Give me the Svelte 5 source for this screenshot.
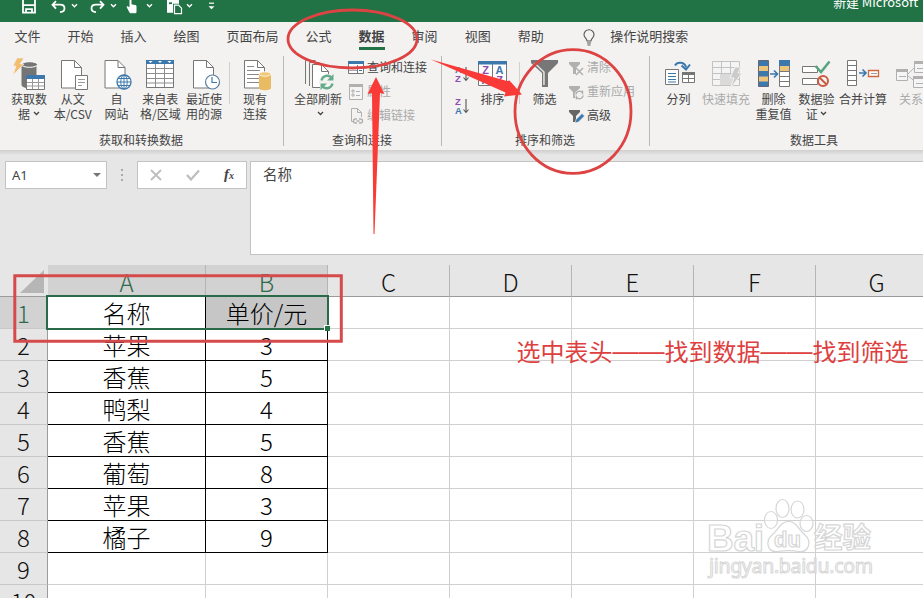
<script>
  const tabs = ['文件', '开始', '插入', '绘图', '页面布局', '公式', '数据', '审阅', '视图', '帮助'];
  const active = '数据';

  const getData = [
    { icon: 'database', lines: ['获取数', '据'], menu: true },
    { icon: 'csv', lines: ['从文', '本/CSV'] },
    { icon: 'web', lines: ['自', '网站'] },
    { icon: 'table', lines: ['来自表', '格/区域'] },
    { icon: 'recent', lines: ['最近使', '用的源'] }
  ];

  const tools = [
    { icon: 'split', lines: ['分列'], w: 47 },
    { icon: 'flash', lines: ['快速填充'], w: 48, off: true },
    { icon: 'dedupe', lines: ['删除', '重复值'], w: 47 },
    { icon: 'validate', lines: ['数据验', '证'], w: 39, menu: true },
    { icon: 'merge', lines: ['合并计算'], w: 54 },
    { icon: 'relation', lines: ['关系'], w: 42, off: true }
  ];

  const columns = ['A', 'B', 'C', 'D', 'E', 'F', 'G'];
  const rows = [
    ['名称', '单价/元'],
    ['苹果', '3'],
    ['香蕉', '5'],
    ['鸭梨', '4'],
    ['香蕉', '5'],
    ['葡萄', '8'],
    ['苹果', '3'],
    ['橘子', '9'],
    [],
    []
  ];
</script>

{#snippet chevron()}
  <svg class="chev" width="7" height="5" viewBox="0 0 7 5"><path d="M1 1l2.500 2.500L6 1" fill="none" stroke="currentColor" stroke-width="1.300" /></svg>
{/snippet}

{#snippet page(x)}
  <path d="M{x} 4.5h13l7 7v20.5h-20z" fill="#fff" stroke="#777" />
  <path d="M{x + 13} 4.5v7h7" fill="none" stroke="#777" />
{/snippet}

{#snippet bigIcon(name)}
  <svg class="big-icon" width="40" height="36" viewBox="0 0 40 36" fill="none">
    {#if name === 'database'}
      <path d="M12.500 8.500v20c0 5 15 5 15 0v-20z" fill="#757575" />
      <ellipse cx="20.500" cy="8.500" rx="8" ry="2.800" fill="#757575" stroke="#fff" stroke-width="1" />
      <path d="M8 2h7l-4 6h4L4 19l3-9H4z" fill="#f2bd6d" stroke="#f3f2f1" stroke-width=".6" />
      <path d="M17.500 19.500h18v14h-18z" fill="#fff" stroke="#777" />
      <path d="M17 19h19v4H17z" fill="#3d78ad" />
      <path d="M23.500 23v10M29.500 23v10M18 26.500h17M18 30h17" stroke="#999" />
    {:else if name === 'csv'}
      {@render page(8.5)}
      <path d="M22.500 19.500h12v14h-12z" fill="#fff" stroke="#777" />
      <path d="M25 23.500h7M25 26.500h7M25 29.500h4" stroke="#999" />
    {:else if name === 'web'}
      {@render page(9)}
      <circle cx="28" cy="26" r="7" fill="#fff" stroke="#3d78ad" stroke-width="1.300" />
      <ellipse cx="28" cy="26" rx="3.200" ry="7" stroke="#3d78ad" />
      <path d="M21 26h14M22.500 22.500h11M22.500 29.500h11M28 19v14" stroke="#3d78ad" />
    {:else if name === 'table'}
      <path d="M6.500 4.500h27v27h-27z" fill="#fff" stroke="#777" />
      <path d="M6 4h28v4H6z" fill="#3d78ad" />
      <path d="M8.500 5h4l-2 2zM18 5h4l-2 2zM27.500 5h4l-2 2z" fill="#fff" />
      <path d="M15.500 8v23M24.500 8v23M7 12.500h26M7 17.500h26M7 22.500h26M7 27h26" stroke="#8d8d8d" />
    {:else if name === 'recent'}
      {@render page(9.5)}
      <circle cx="28.500" cy="26" r="7" fill="#fff" stroke="#5c7f9f" stroke-width="1.200" />
      <path d="M28 21v5.500h5" stroke="#3d78ad" stroke-width="1.200" />
    {:else if name === 'existing'}
      {@render page(9.5)}
      <path d="M12 10.500h7M12 14.500h13M12 18.500h12M12 22.500h12M12 26.500h12" stroke="#888" />
      <path d="M24 18v14c0 3 12 3 12 0V18z" fill="#e9bb62" />
      <ellipse cx="30" cy="18" rx="6" ry="2.200" fill="#f0c877" stroke="#fff" stroke-width=".8" />
    {:else if name === 'refresh'}
      <path d="M7.500 28V4.500h10M11.500 30V6.500h10" stroke="#777" />
      <path d="M14.500 32V8.500h9l7 7V32z" fill="#fff" />
      <path d="M22 31.500h-7.500V8.500h9v7h7M23.500 8.500l7 7v3" stroke="#777" />
      <circle cx="29" cy="26" r="8" fill="#f3f2f1" />
      <path d="M23.500 24.500a6 6 0 0 1 10.500-2.500M34.500 27.500a6 6 0 0 1-10.500 2.500" stroke="#66ab8c" stroke-width="2.300" />
      <path d="M35.500 18v6.500H29zM22.500 34v-6.500H29z" fill="#66ab8c" />
    {:else if name === 'sort'}
      <path d="M5.500 5.500h28v24h-28zM19.500 6v23" fill="#fff" stroke="#777" />
      <path d="M5 5h29v3.500H5z" fill="#3d78ad" />
      <g font-family="Liberation Sans, sans-serif" font-size="11" font-weight="700" text-anchor="middle">
        <text x="12.500" y="18" fill="#8f4cae">Z</text><text x="12.500" y="28" fill="#3d78ad">A</text>
        <text x="26.500" y="18" fill="#3d78ad">A</text><text x="26.500" y="28" fill="#8f4cae">Z</text>
      </g>
    {:else if name === 'filter'}
      <path d="M6 4h27v3L23 17v14h-6V17L6 7z" fill="#777" />
      <path d="M8.500 7l9.700 9.200V29h1.500V15.700L10.500 7z" fill="#e7e7e7" />
    {:else if name === 'split'}
      <path d="M6.500 13.500h13v15h-13z" fill="#fff" stroke="#777" />
      <path d="M9 17.500h8M9 20.500h8M9 23.500h8M9 26h8" stroke="#3d78ad" />
      <path d="M23.500 16.500h12v10h-12z" fill="#fff" stroke="#777" />
      <path d="M23 16h13v3H23z" fill="#757575" />
      <path d="M29.500 19v7M24 22.500h11" stroke="#777" />
      <path d="M16 9.500c2-4 10-4 11 2" stroke="#3d78ad" stroke-width="2" />
      <path d="M22.500 9.500l4.500 4 4-5" stroke="#3d78ad" stroke-width="2" />
    {:else if name === 'flash'}
      <path d="M6.500 5.500h27v24h-27zM15.500 5.500v24M24.500 5.500v24M6.500 11.500h27M6.500 17.500h27M6.500 23.500h27" fill="#f5f4f4" stroke="#c2c2c2" />
      <path d="M14 18h14v11H14z" fill="#dadada" />
      <path d="M29 11h6l-3 6h4L24 33l4-11h-4z" fill="#cdcaca" stroke="#f3f2f1" />
    {:else if name === 'dedupe'}
      <path d="M4.500 4.500h10v26h-10z" fill="#3d78ad" stroke="#667" />
      <path d="M5 10h9v5H5zM5 20.500h9v5H5z" fill="#edc47c" />
      <path d="M25.500 4.500h10v26h-10z" fill="#fff" stroke="#777" />
      <path d="M25 4h11v6H25z" fill="#3d78ad" /><path d="M26 10h9v5h-9z" fill="#edc47c" />
      <path d="M26 15.500h9M26 20.500h9M26 25.500h9" stroke="#777" />
      <path d="M16 18h7M20 14.500l3.500 3.500-3.500 3.500" stroke="#3d78ad" stroke-width="1.700" />
    {:else if name === 'validate'}
      <path d="M5.500 10.500h15v6h-15zM5.500 22.500h15v6h-15z" fill="#fff" stroke="#777" />
      <path d="M18.500 10l5.500 6 8.500-10.500" stroke="#56a480" stroke-width="2.500" />
      <circle cx="26" cy="25" r="5" fill="#f3f2f1" stroke="#cc5b45" stroke-width="2" />
      <path d="M22.500 21.500l7 7" stroke="#cc5b45" stroke-width="2" />
    {:else if name === 'merge'}
      <path d="M4.500 4.500h9v25h-9zM4.500 9.500h9M4.500 14.500h9M4.500 19.500h9M4.500 24.500h9" fill="#fff" stroke="#777" />
      <path d="M16 17h6M19.500 13.500L23 17l-3.500 3.500" stroke="#3d78ad" stroke-width="1.700" />
      <path d="M25.500 14.500h10v6h-10z" fill="#fff" stroke="#cf6840" stroke-width="1.300" />
      <path d="M28 17.500h6" stroke="#999" />
    {:else if name === 'relation'}
      <path d="M17 18l8-8M17 20l8 6" stroke="#b5b5b5" />
      <path d="M5.500 13.500h11v11h-11zM23.500 5.500h13v11h-13zM22.500 20.500h13v11h-13z" fill="#f5f5f5" stroke="#b0b0b0" />
      <path d="M5 13h12v3H5zM23 5h14v3H23zM22 20h14v3H22z" fill="#b0b0b0" />
      <path d="M8 20.500h7M26 12.500h8M25 27.500h8" stroke="#b0b0b0" />
    {/if}
  </svg>
{/snippet}

{#snippet command(icon, lines, menu, off, w)}
  <div class="command" class:off style:width="{w}px">
    {@render bigIcon(icon)}
    {#each lines as line, i}
      <span>{line}{#if menu && i === lines.length - 1}&nbsp;{@render chevron()}{/if}</span>
    {/each}
  </div>
{/snippet}

{#snippet smallFunnel(color)}
  <path d="M0 1h11v2L7 7v6H4V7L0 3z" fill={color} />
{/snippet}

<div class="window">
  <header class="title">
    <div class="quick">
      <svg width="193" height="22" viewBox="0 -.7 193 22" fill="none" stroke="#fff" stroke-width="1.800">
        <path d="M1-1v13h12V-1M1 4.500h12M4 12V8.500h6V12" />
        <path d="M34 .5L30.500 4l3.500 4M31 4h7c6 0 6 7 0 7.500" />
        <path d="M78 .5L81.500 4 78 8M81 4h-7c-6 0-6 7 0 7.500" />
        <path d="M108-1v8l-3-1 3 6h6V5l-5-1v-5z" fill="#fff" stroke-width="1" />
        <path d="M145-1h12v4h-6v9h-6z" fill="#fff" stroke="none" /><path d="M147 2.500h3" stroke="#217346" /><path d="M152.500 4.500h4l3 3v5.500h-7z" fill="#217346" stroke-width="1.200" />
        <g stroke-width="1.400"><path d="M50 3.500l2.500 2.500L55 3.500M89 3.500l2.500 2.500L94 3.500M125 3.500l2.500 2.500 2.500-2.500M165 3.500l2.500 2.500 2.500-2.500" /></g>
        <path d="M187 2.500h5" stroke-width="1.200" /><path d="M186.500 5.500h6l-3 3z" fill="#fff" stroke="none" />
      </svg>
    </div>
    <span>新建 Microsoft</span>
  </header>

  <nav class="tabs">
    {#each tabs as tab}
      <span class:active={tab === active}>{tab}</span>
    {/each}
    <div class="tell">
      <svg width="12" height="17" viewBox="0 0 12 17" fill="none" stroke="#555" stroke-width="1.100">
        <path d="M4 12c0-2.500-3-3.300-3-6.300a5 5 0 0 1 10 0C11 8.700 8 9.500 8 12zM4 14h4M4.500 16h3" />
      </svg>
      <span>操作说明搜索</span>
    </div>
  </nav>

  <section class="ribbon">
    <div class="group g1">
      <div class="commands">
        {#each getData as c}
          {@render command(c.icon, c.lines, c.menu, false, 43.8)}
        {/each}
        <i class="divider"></i>
        {@render command('existing', ['现有', '连接'], false, false, 50)}
      </div>
      <div class="caption">获取和转换数据</div>
    </div>

    <div class="group g2">
      <div class="commands">
        <div class="command refresh">
          {@render bigIcon('refresh')}
          <span>全部刷新</span>
          <span>{@render chevron()}</span>
        </div>
        <div class="stack">
          <div>
            <svg width="16" height="16" viewBox="0 0 16 16" fill="none"><path d="M.5 1.500h15v12H.5zM9.500 5v8" fill="#fff" stroke="#777" /><path d="M0 1h16v3H0z" fill="#3d78ad" /><path d="M1 7.500h8M1 10.500h8" stroke="#aaa" /><path d="M11 7.500h3M11 10.500h3" stroke="#3d78ad" /></svg>
            <span>查询和连接</span>
          </div>
          <div class="off">
            <svg width="16" height="16" viewBox="0 0 16 16" fill="none"><path d="M1.500.5h13v15h-13z" fill="#f5f5f5" stroke="#b0b0b0" /><path d="M1 0h14v3H1z" fill="#b0b0b0" /><path d="M4 6h2v2H4zM4 10h2v2H4zM8 7.500h4M8 11.500h4" stroke="#b0b0b0" /></svg>
            <span>属性</span>
          </div>
          <div class="off">
            <svg width="16" height="16" viewBox="0 0 16 16" fill="none"><path d="M5 13.500H3.500V.5h6l4 4V9M9.500.5v4h4" stroke="#b0b0b0" /><path d="M9 11H7.500a2 2 0 0 0 0 4H9M11 11h1.500a2 2 0 0 1 0 4H11M8.500 13h3" stroke="#b0b0b0" stroke-width="1.400" /></svg>
            <span>编辑链接</span>
          </div>
        </div>
      </div>
      <div class="caption">查询和连接</div>
    </div>

    <div class="group g3">
      <div class="commands">
        <div class="sorts">
          {#each [['A', 'Z'], ['Z', 'A']] as pair}
            <svg width="16" height="20" viewBox="0 0 16 20" fill="none">
              <g font-family="Liberation Sans, sans-serif" font-size="9.500" font-weight="700">
                {#each pair as letter, i}
                  <text x="0" y={8.5 + i * 9} fill={letter === 'A' ? '#3d78ad' : '#8f4cae'}>{letter}</text>
                {/each}
              </g>
              <path d="M11 3v13M8.500 13.500L11 16.500l2.500-3" stroke="#555" stroke-width="1.100" />
            </svg>
          {/each}
        </div>
        {@render command('sort', ['排序'], false, false, 47)}
        <i class="divider"></i>
        {@render command('filter', ['筛选'], false, false, 49)}
        <div class="stack filters">
          <div class="off">
            <svg width="16" height="15" viewBox="0 0 16 15" fill="none">{@render smallFunnel('#b0b0b0')}<path d="M7 7l7 7M14 7l-7 7" stroke="#b0b0b0" stroke-width="1.500" /></svg>
            <span>清除</span>
          </div>
          <div class="off">
            <svg width="16" height="15" viewBox="0 0 16 15" fill="none">{@render smallFunnel('#b0b0b0')}<circle cx="10.500" cy="10" r="4.800" fill="#f3f2f1" /><path d="M7 9.500a3.500 3.500 0 0 1 6.500-1.500V5.500M14 10.500A3.500 3.500 0 0 1 7.500 12v2.500" stroke="#b0b0b0" stroke-width="1.400" /></svg>
            <span>重新应用</span>
          </div>
          <div>
            <svg width="16" height="15" viewBox="0 0 16 15" fill="none">{@render smallFunnel('#666')}<path d="M6 14l1-3.500 6-6 2.500 2.500-6 6z" fill="#3d78ad" stroke="#f3f2f1" stroke-width=".6" /></svg>
            <span>高级</span>
          </div>
        </div>
      </div>
      <div class="caption">排序和筛选</div>
    </div>

    <div class="group g4">
      <div class="commands">
        {#each tools as c}
          {@render command(c.icon, c.lines, c.menu, c.off, c.w)}
        {/each}
      </div>
      <div class="caption">数据工具</div>
    </div>
  </section>

  <section class="formula">
    <div class="box name"><span>A1</span><i></i></div>
    <div class="dots"><i></i><i></i><i></i></div>
    <div class="box actions">
      <svg width="12" height="12" viewBox="0 0 12 12"><path d="M1 1l10 10M11 1L1 11" stroke="#bdbdbd" stroke-width="1.800" /></svg>
      <svg width="14" height="12" viewBox="0 0 14 12"><path d="M1 6l4 4.500L13 1.500" fill="none" stroke="#bdbdbd" stroke-width="2.200" /></svg>
      <span class="fx">f<small>x</small></span>
    </div>
    <div class="box value">名称</div>
  </section>

  <section class="sheet">
    <div class="corner"><svg width="24" height="23" viewBox="0 0 24 23"><path d="M24 0v23H0z" fill="#b6b6b6" /></svg></div>
    {#each columns as col, i}
      <div class="colhead" class:sel={i < 2}>{col}</div>
    {/each}
    {#each rows as row, r}
      <div class="rowhead" class:sel={r === 0}>{r + 1}</div>
      {#each columns as col, c}
        <div class="cell" class:data={c < 2 && r < 8} class:picked={r === 0 && c === 1}>{row[c] ?? ''}</div>
      {/each}
    {/each}
    <div class="selection"><i></i></div>
    <div class="note">选中表头<b>——</b>找到数据<b>——</b>找到筛选</div>
  </section>

  <svg class="overlay" width="923" height="598" viewBox="0 0 923 598" fill="none">
    <g fill="#fff" fill-opacity=".35" stroke="#d6d6d6" stroke-width="1.200">
      <g font-family="Liberation Sans, sans-serif" font-weight="700">
        <text x="707" y="551" font-size="37" textLength="57">Bai</text>
        <path d="M788.500 521.500c8 0 10 8 16 13 8 7 4 18-5 17-7-1-15-1-22 0-10 1-13-10-5-17 6-5 8-13 16-13z" />
        <ellipse cx="771" cy="520" rx="6.500" ry="8.500" />
        <ellipse cx="782.500" cy="508.500" rx="6.500" ry="9" />
        <ellipse cx="797.500" cy="509.500" rx="6.500" ry="8.500" />
        <ellipse cx="806.500" cy="523.500" rx="6.500" ry="8" />
        <text x="774" y="547" font-size="22" textLength="27">du</text>
      </g>
      <text x="814" y="548" font-family="Noto Sans CJK SC, sans-serif" font-weight="700" font-size="28.500">经验</text>
      <text x="709" y="573" font-family="Noto Sans, sans-serif" font-size="19.500" textLength="164" stroke-width="1">jingyan.baidu.com</text>
    </g>
    <g stroke="#dd4343">
      <ellipse cx="352.500" cy="39" rx="64.500" ry="29" stroke-width="2.800" />
      <ellipse cx="573" cy="111.500" rx="58" ry="61.800" stroke-width="2.800" />
      <path d="M14.800 275.800h326.500v65.500H14.800z" stroke="#d54b4b" stroke-width="3" />
    </g>
    <path d="M376 77l8.500 17-4.500-1-5.500 141h-1L372 93l-4.500 1z" fill="#f93a37" />
    <path d="M431 59.500l76 21.500 2.500-.5 12.500 14-18 2 1.500-4z" fill="#f93a37" />
  </svg>
</div>

<style>
  .window {
    position: relative;
    width: 923px;
    height: 598px;
    overflow: hidden;
    background: #fff;
    color: #444;
    font: 12px/15px "Noto Sans CJK SC", "Noto Sans", sans-serif;
    white-space: nowrap;
    display: flex;
    flex-direction: column;
  }
  .window * { box-sizing: border-box; }
  svg { display: block; flex: none; }
  .off { color: #aaa; }

  .title {
    height: 22px;
    flex: none;
    background: #217346;
    color: #fff;
    display: flex;
    justify-content: space-between;
    padding: 0 5px 0 22px;
  }
  .title span { margin-top: -6px; font-size: 12.900px; line-height: 16px; }

  .tabs {
    height: 30px;
    flex: none;
    background: #f3f2f1;
    display: flex;
    gap: 27px;
    padding: 5px 0 0 14.500px;
    font-size: 13px;
    line-height: 18px;
  }
  .tabs > span { height: 23px; }
  .tabs .active { font-weight: 700; border-bottom: 3px solid #217346; }
  .tell { display: flex; gap: 15px; margin-left: 12.500px; }
  .tell svg { margin-top: 2px; }

  .ribbon {
    height: 98px;
    flex: none;
    background: #f3f2f1;
    display: flex;
    overflow: hidden;
  }
  .group {
    position: relative;
    flex: none;
    display: flex;
    flex-direction: column;
    padding-top: 4px;
  }
  .group::after {
    content: "";
    position: absolute;
    right: 0;
    top: 4px;
    width: 1px;
    height: 90px;
    background: #b9b8b7;
  }
  .g1 { width: 284px; }
  .g2 { width: 158px; }
  .g3 { width: 208px; }
  .g4 { width: 330px; }
  .commands { height: 76px; display: flex; }
  .g1 .commands { padding-left: 7px; }
  .g2 .commands { padding-left: 7px; }
  .g3 .commands { padding-left: 13px; }
  .g4 .commands { padding-left: 5px; }
  .command { flex: none; display: flex; flex-direction: column; align-items: center; }
  .command span { display: flex; align-items: center; height: 15px; }
  .command .big-icon { margin-bottom: -1px; }
  .refresh { width: 54px; }
  .refresh span + span { margin-left: 4px; }
  .caption { text-align: center; line-height: 16px; padding-right: 2px; }
  .divider { width: 1px; height: 42px; margin-top: 6px; margin-left: 3px; background: #d2d0cf; }
  .stack { margin-left: 3px; }
  .stack div { height: 24px; display: flex; align-items: center; gap: 3px; }
  .stack span { margin-top: -3px; }
  .filters { margin-left: 0; }
  .filters div { gap: 2px; }
  .sorts { width: 14px; display: flex; flex-direction: column; gap: 12px; padding-top: 8px; }

  .formula {
    height: 115px;
    flex: none;
    background: linear-gradient(#cfcfcf, #e6e6e6 5px);
    display: flex;
    align-items: flex-start;
    padding: 11px 0 0 5px;
  }
  .box { height: 28px; background: #fff; border: 1px solid #c3c3c3; display: flex; align-items: center; }
  .name { width: 102px; justify-content: space-between; padding: 0 5px 0 6px; font-family: "Noto Sans", sans-serif; font-size: 13px; }
  .name i { border: 4px solid transparent; border-top-color: #777; border-bottom: 0; }
  .dots { width: 30px; height: 28px; display: flex; flex-direction: column; align-items: center; justify-content: center; gap: 3px; }
  .dots i { width: 2px; height: 2px; background: #aaa; }
  .actions { width: 110px; padding: 0 12px; justify-content: space-between; }
  .fx { font: italic 700 15px/20px "Liberation Serif", serif; }
  .fx small { font-size: 10px; }
  .value { flex: 1; height: 94px; margin-left: 3px; border-right: 0; padding: 2px 0 0 12px; align-items: flex-start; font-size: 14.500px; line-height: 20px; }

  .sheet {
    position: relative;
    flex: none;
    width: 938px;
    display: grid;
    grid-template-columns: 48px 158px repeat(6, 122px);
    grid-auto-rows: 32px;
    font-size: 24px;
    line-height: 32px;
    font-weight: 300;
    color: #111;
    text-align: center;
  }
  .corner, .colhead { background: #e6e6e6; border-bottom: 1px solid #9b9b9b; }
  .corner { display: flex; justify-content: flex-end; padding: 5px 4px 0 0; }
  .colhead { border-right: 1px solid #b5b5b5; line-height: 34px; }
  .rowhead { background: #e6e6e6; border-right: 1px solid #9b9b9b; border-bottom: 1px solid #c8c8c8; }
  .sel { background: #d2d2d2; color: #2d6a4b; }
  .cell { border-right: 1px solid #d0d0d0; border-bottom: 1px solid #d0d0d0; }
  .data { border-color: #000; color: #000; }
  .picked { background: #c6c6c6; }
  .selection {
    position: absolute;
    left: 46px;
    top: 30px;
    width: 283px;
    height: 35px;
    border: 2px solid #2a6a49;
  }
  .selection i {
    position: absolute;
    right: -3px;
    bottom: -3px;
    width: 6px;
    height: 6px;
    background: #217346;
    border: solid #fff;
    border-width: 1px 0 0 1px;
  }
  .note {
    position: absolute;
    left: 516.500px;
    top: 70px;
    color: #de3f3f;
    font-weight: 400;
    display: flex;
  }
  .note b { font: 400 26px/32px "Liberation Sans", sans-serif; }
  .overlay { position: absolute; left: 0; top: 0; }
</style>
